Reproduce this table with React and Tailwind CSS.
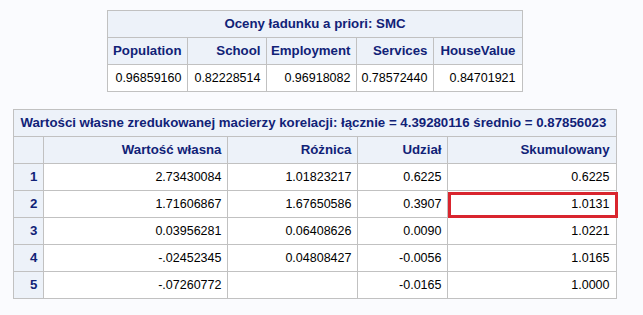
import React from 'react';

const smc = [
  { name: 'Population', value: '0.96859160', w: 'w-[80px]' },
  { name: 'School', value: '0.82228514', w: 'w-[79px]' },
  { name: 'Employment', value: '0.96918082', w: 'w-[90px]' },
  { name: 'Services', value: '0.78572440', w: 'w-[77px]' },
  { name: 'HouseValue', value: '0.84701921', w: 'w-[88px]' },
];

const eigen = [
  ['1', '2.73430084', '1.01823217', '0.6225', '0.6225'],
  ['2', '1.71606867', '1.67650586', '0.3907', '1.0131'],
  ['3', '0.03956281', '0.06408626', '0.0090', '1.0221'],
  ['4', '-.02452345', '0.04808427', '-0.0056', '1.0165'],
  ['5', '-.07260772', '', '-0.0165', '1.0000'],
];

const head = 'border border-[#c1c1c1] bg-[#edf2f9] text-[#112277] font-bold text-[13.25px] h-[27px] p-0 pr-[6px] text-right';
const cell = 'border border-[#c1c1c1] bg-white text-black text-[12.5px] h-[27px] p-0 pr-[6px] text-right';

export default function App() {
  return (
    <div className="min-h-[315px] bg-[#fafbfe] font-['Liberation_Sans',Arial,sans-serif]">
      <div className="w-[630px] flex flex-col items-center pt-[10px] gap-[17px]">
        <table className="table-fixed border-collapse w-[414px]">
          <colgroup>
            {smc.map((c) => (
              <col key={c.name} className={c.w} />
            ))}
          </colgroup>
          <thead>
            <tr>
              <th colSpan={5} className={head + ' !text-center !pr-0'}>
                Oceny ładunku a priori: SMC
              </th>
            </tr>
            <tr>
              {smc.map((c) => (
                <th key={c.name} className={head}>{c.name}</th>
              ))}
            </tr>
          </thead>
          <tbody>
            <tr>
              {smc.map((c) => (
                <td key={c.name} className={cell}>{c.value}</td>
              ))}
            </tr>
          </tbody>
        </table>

        <table className="table-fixed border-collapse w-[602px]">
          <colgroup>
            <col className="w-[30px]" />
            <col className="w-[184px]" />
            <col className="w-[130px]" />
            <col className="w-[90px]" />
            <col className="w-[168px]" />
          </colgroup>
          <thead>
            <tr>
              <th colSpan={5} className={head + ' !text-left pl-[6px]'}>
                Wartości własne zredukowanej macierzy korelacji: łącznie = 4.39280116 średnio = 0.87856023
              </th>
            </tr>
            <tr>
              <th className={head}></th>
              <th className={head}>Wartość własna</th>
              <th className={head}>Różnica</th>
              <th className={head}>Udział</th>
              <th className={head}>Skumulowany</th>
            </tr>
          </thead>
          <tbody>
            {eigen.map((r) => (
              <tr key={r[0]}>
                <th className={head}>{r[0]}</th>
                <td className={cell}>{r[1]}</td>
                <td className={cell}>{r[2]}</td>
                <td className={cell}>{r[3]}</td>
                <td className={cell + ' relative'}>
                  {r[4]}
                  {r[0] === '2' && (
                    <div className="absolute left-0 top-[1px] right-[-2px] bottom-[-1px] border-[3px] border-[#d9252e]" />
                  )}
                </td>
              </tr>
            ))}
          </tbody>
        </table>
      </div>
    </div>
  );
}
